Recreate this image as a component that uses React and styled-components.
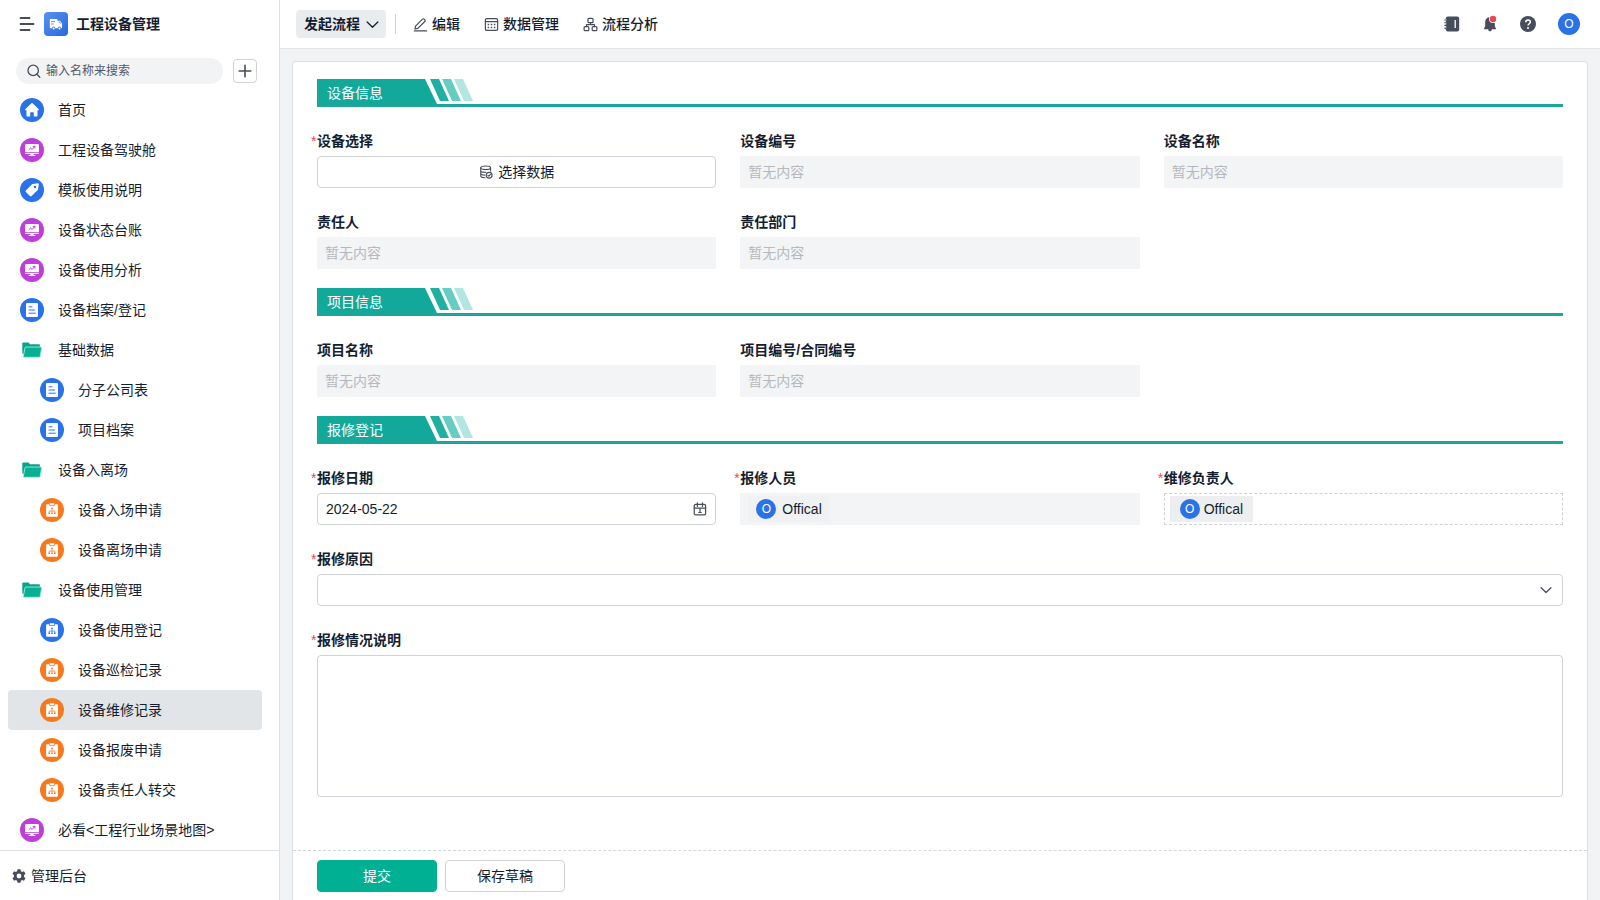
import React, { useState } from "react";
import styled, { createGlobalStyle } from "styled-components";

const GlobalStyle = createGlobalStyle`
  * {
    box-sizing: border-box;
  }

  body {
    margin: 0;
    background: #f1f3f5;
    color: #141e31;
    font-family: "Liberation Sans", "Noto Sans CJK SC", sans-serif;
    font-size: 14px;
    line-height: 22px;
  }

  button, input, select, textarea {
    font: inherit;
    color: inherit;
  }

  svg {
    display: block;
    flex-shrink: 0;
  }
`;

const Layout = styled.div`
  display: flex;
  height: 100vh;
`;

const Sidebar = styled.aside`
  display: flex;
  flex-direction: column;
  flex: 0 0 280px;
  background: #fff;
  border-right: 1px solid #dee0e2;
`;

const SidebarHeader = styled.div`
  display: flex;
  align-items: center;
  gap: 8px;
  padding: 12px 18px 0;
`;

const IconButton = styled.button`
  display: flex;
  align-items: center;
  justify-content: center;
  padding: 0;
  border: none;
  background: none;
  color: #484d5b;
  cursor: pointer;
`;

const MenuButton = styled(IconButton)`
  width: 18px;
  height: 18px;
`;

const AppLogo = styled.span`
  display: flex;
  align-items: center;
  justify-content: center;
  width: 24px;
  height: 24px;
  border-radius: 4px;
  background: linear-gradient(135deg, #5b93ee, #2a66dd);
`;

const AppName = styled.h1`
  margin: 0;
  font-size: 14px;
  font-weight: 700;
  line-height: 24px;
`;

const SearchRow = styled.div`
  display: flex;
  align-items: center;
  gap: 10px;
  padding: 22px 22px 6px 16px;
`;

const SearchBox = styled.label`
  display: flex;
  align-items: center;
  gap: 4px;
  flex: 1;
  height: 26px;
  padding: 0 10px;
  border-radius: 13px;
  background: #f1f3f4;
  color: #484d5b;
`;

const SearchInput = styled.input`
  flex: 1;
  min-width: 0;
  padding: 0;
  border: none;
  outline: none;
  background: transparent;
  font-size: 12px;
  line-height: 20px;

  &::placeholder {
    color: #525966;
    opacity: 1;
  }
`;

const AddButton = styled(IconButton)`
  width: 24px;
  height: 24px;
  border: 1px solid #cfd2d6;
  border-radius: 4px;
`;

const NavList = styled.nav`
  flex: 1;
  min-height: 0;
  overflow-y: auto;
  padding: 0 17px 0 8px;
`;

const NavItem = styled.a`
  display: flex;
  align-items: center;
  gap: 14px;
  height: 40px;
  padding-left: ${({ $nested }) => ($nested ? "32px" : "12px")};
  border-radius: 4px;
  background: ${({ $active }) => ($active ? "#e1e5e8" : "transparent")};
  color: #141e31;
  text-decoration: none;

  &:hover {
    background: ${({ $active }) => ($active ? "#e1e5e8" : "#f1f3f4")};
  }
`;

const NavIcon = styled.span`
  display: flex;
  align-items: center;
  justify-content: center;
  width: 24px;
  height: 24px;
  border-radius: 50%;
  background: ${({ $color }) => $color};
`;

const SidebarFooter = styled.a`
  display: flex;
  align-items: center;
  gap: 5px;
  height: 50px;
  padding: 1px 12px 0;
  border-top: 1px solid #dee0e2;
  color: #141e31;
  text-decoration: none;
`;

const Main = styled.main`
  display: flex;
  flex-direction: column;
  flex: 1;
  min-width: 0;
`;

const Topbar = styled.header`
  display: flex;
  align-items: center;
  height: 49px;
  padding: 0 20px 0 16px;
  border-bottom: 1px solid #e3e5e8;
  background: #fff;
`;

const StartButton = styled.button`
  display: flex;
  align-items: center;
  gap: 6px;
  height: 28px;
  padding: 0 7px 0 8px;
  border: none;
  border-radius: 4px;
  background: #e9ecef;
  font-weight: 700;
  cursor: pointer;
`;

const Divider = styled.span`
  width: 1px;
  height: 20px;
  margin: 0 17px 0 9px;
  background: #d0d3d7;
`;

const TopActions = styled.div`
  display: flex;
  gap: 24px;
`;

const TopAction = styled.button`
  display: flex;
  align-items: center;
  gap: 4px;
  padding: 0;
  border: none;
  background: none;
  font-weight: 500;
  cursor: pointer;

  svg {
    color: #484d5b;
  }
`;

const TopTools = styled.div`
  display: flex;
  align-items: center;
  gap: 22px;
  margin-left: auto;
`;

const Avatar = styled.span`
  display: flex;
  align-items: center;
  justify-content: center;
  width: ${({ $size }) => $size}px;
  height: ${({ $size }) => $size}px;
  border-radius: 50%;
  background: #2a72e8;
  color: #fff;
  font-size: 12px;
`;

const Card = styled.form`
  display: flex;
  flex-direction: column;
  flex: 1;
  min-height: 0;
  margin: 12px 12px 0;
  border: 1px solid #dcdfe3;
  border-bottom: none;
  border-radius: 4px 4px 0 0;
  background: #fff;
`;

const CardBody = styled.div`
  flex: 1;
  min-height: 0;
  overflow-y: auto;
  padding: 17px 24px 24px;
`;

const Section = styled.section`
  & + & {
    margin-top: 19px;
  }
`;

const SectionHeader = styled.div`
  display: flex;
  height: 28px;
  border-bottom: 3px solid #1ca598;
`;

const SectionTitle = styled.h2`
  width: 120px;
  margin: 0;
  padding-left: 10px;
  background: #12a99b;
  clip-path: polygon(0 0, 108px 0, 100% 100%, 0 100%);
  color: #fff;
  font-size: 14px;
  font-weight: 400;
  line-height: 28px;
`;

// the stripes start above the slanted end of the title
const StripeWrap = styled.span`
  margin-left: -7px;
`;

const Fields = styled.div`
  display: grid;
  grid-template-columns: repeat(3, minmax(0, 1fr));
  gap: 23px 24px;
  margin-top: 23px;
`;

const FieldBox = styled.div`
  grid-column: ${({ $wide }) => ($wide ? "1 / -1" : "auto")};
`;

const FieldLabel = styled.label`
  display: block;
  margin-bottom: 4px;
  font-weight: 700;
`;

const Required = styled.span`
  display: inline-block;
  width: 6px;
  margin-left: -6px;
  color: #e5484d;
  font-weight: 400;
`;

const controlFrame = `
  display: flex;
  align-items: center;
  width: 100%;
  height: 32px;
  border: 1px solid #cfd2d6;
  border-radius: 4px;
  background: #fff;
`;

const EmptyInput = styled.input`
  display: block;
  width: 100%;
  height: 32px;
  padding: 0 8px;
  border: none;
  border-radius: 2px;
  outline: none;
  background: #f3f4f5;

  &::placeholder {
    color: #b5b8be;
    opacity: 1;
  }
`;

const PickButton = styled.button`
  ${controlFrame}
  justify-content: center;
  gap: 5px;
  cursor: pointer;

  svg {
    color: #484d5b;
  }
`;

const DateBox = styled.div`
  ${controlFrame}
  padding: 0 8px;
  color: #484d5b;
`;

const DateInput = styled.input`
  flex: 1;
  min-width: 0;
  padding: 0;
  border: none;
  outline: none;
  background: transparent;
  color: #141e31;
`;

const SelectBox = styled.div`
  display: grid;
  align-items: center;

  select, svg {
    grid-area: 1 / 1;
  }

  svg {
    justify-self: end;
    margin-right: 11px;
    color: #484d5b;
    pointer-events: none;
  }
`;

const Select = styled.select`
  ${controlFrame}
  appearance: none;
  padding: 0 32px 0 8px;
`;

const TextArea = styled.textarea`
  display: block;
  width: 100%;
  height: 142px;
  padding: 4px 8px;
  border: 1px solid #cfd2d6;
  border-radius: 4px;
  outline: none;
  resize: none;
`;

const MemberBox = styled.div`
  display: flex;
  align-items: center;
  height: 32px;
  padding: ${({ $readOnly }) => ($readOnly ? "0 8px" : "0 5px")};
  border: ${({ $readOnly }) => ($readOnly ? "none" : "1px dashed #cfd2d6")};
  background: ${({ $readOnly }) => ($readOnly ? "#f3f4f5" : "#fff")};
`;

const MemberTag = styled.span`
  display: flex;
  align-items: center;
  gap: ${({ $readOnly }) => ($readOnly ? "6px" : "4px")};
  height: 26px;
  padding: ${({ $readOnly }) => ($readOnly ? "0 8px" : "0 10px")};
  background: ${({ $readOnly }) => ($readOnly ? "#f0f1f3" : "#eceef0")};
`;

const CardFooter = styled.div`
  display: flex;
  gap: 8px;
  padding: 9px 24px 8px;
  border-top: 1px dashed #d5d8db;
`;

const FormButton = styled.button`
  width: 120px;
  height: 32px;
  border: 1px solid ${({ $primary }) => ($primary ? "#00b092" : "#cfd2d6")};
  border-radius: 4px;
  background: ${({ $primary }) => ($primary ? "#00b092" : "#fff")};
  color: ${({ $primary }) => ($primary ? "#fff" : "#141e31")};
  cursor: pointer;
`;

const Line = ({ size = 16, width = 1.3, children }) => (
  <svg
    width={size}
    height={size}
    viewBox="0 0 16 16"
    fill="none"
    stroke="currentColor"
    strokeWidth={width}
    strokeLinecap="round"
    strokeLinejoin="round"
    aria-hidden="true"
  >
    {children}
  </svg>
);

const MenuIcon = () => (
  <Line width={1.8}>
    <path d="M1.5 2h9M1.5 8h13M1.5 14h9" />
  </Line>
);

const TruckIcon = () => (
  <svg width="14" height="14" viewBox="0 0 14 14" aria-hidden="true">
    <path
      fill="#fff"
      d="M1.5 2h6.3c.4 0 .7.3.7.7v1h2.1c.3 0 .5.1.7.3l1.5 2.3c.1.2.2.4.2.6v3.6c0 .4-.3.7-.7.7h-.2a1.6 1.6 0 0 0-3.2 0H6.2a1.6 1.6 0 0 0-3.2 0H1.5a.7.7 0 0 1-.7-.7V2.7c0-.4.3-.7.7-.7z"
    />
    <circle cx="4.6" cy="11.5" r="1" fill="#fff" />
    <circle cx="10.5" cy="11.5" r="1" fill="#fff" />
    <path d="M2 4.6h4M2 7h2.6M9.6 5h1.2l.9 1.6" fill="none" stroke="#417de5" strokeWidth=".8" />
  </svg>
);

const SearchIcon = () => (
  <Line>
    <circle cx="7.2" cy="7.4" r="5.2" />
    <path d="M11 11.3l2.8 2.9" />
  </Line>
);

const PlusIcon = () => (
  <Line width={1.6}>
    <path d="M8 2.2v11.6M2.2 8h11.6" />
  </Line>
);

const HomeIcon = () => (
  <svg width="16" height="16" viewBox="0 0 16 16" aria-hidden="true">
    <path
      fill="#fff"
      d="M8.6 1.3l6.1 5.9c.5.5.2 1.1-.4 1.1h-.8v5.4c0 .5-.3.8-.8.8H9.8v-3.7c0-.4-.2-.6-.6-.6H6.8c-.4 0-.6.2-.6.6v3.7H3.3c-.5 0-.8-.3-.8-.8V8.3h-.8c-.6 0-.9-.6-.4-1.1l6.1-5.9c.4-.3.8-.3 1.2 0z"
    />
  </svg>
);

const MonitorIcon = ({ color }) => (
  <svg width="16" height="16" viewBox="0 0 16 16" aria-hidden="true">
    <path fill="#fff" d="M2 2h12c.5 0 .9.4.9.9V10H1.1V2.9c0-.5.4-.9.9-.9z" />
    <path
      fill="#fff"
      d="M1.1 10.8h13.8v.4c0 .5-.4.9-.9.9H9.8v1H11c.4 0 .6.2.6.5s-.2.5-.6.5H5c-.4 0-.6-.2-.6-.5s.2-.5.6-.5h1.2v-1H2c-.5 0-.9-.4-.9-.9z"
    />
    <path
      d="M4.6 8l2-1.9 1.7 1.3 2.3-2.8M8.8 4.4H11v2"
      fill="none"
      stroke={color}
      strokeWidth="1"
    />
  </svg>
);

const TagIcon = () => (
  <svg width="16" height="16" viewBox="0 0 16 16" aria-hidden="true">
    <path
      fill="#fff"
      fillRule="evenodd"
      d="M8.8 1.9l4.9-.7c.7-.1 1.2.4 1.1 1.1l-.7 4.9c0 .3-.2.6-.4.8l-6.1 6.1c-.5.5-1.2.5-1.7 0l-4-4c-.5-.5-.5-1.2 0-1.7L8 2.3c.2-.2.5-.4.8-.4zM11 3.7a1.3 1.3 0 1 0 0 2.6 1.3 1.3 0 0 0 0-2.6z"
    />
  </svg>
);

const DocumentIcon = ({ color }) => (
  <svg width="14" height="14" viewBox="0 0 14 14" aria-hidden="true">
    <rect x="1" y="0" width="12" height="14" rx="1" fill="#fff" />
    <path d="M4 3.8h3M4 7h5.6M4 10.2h6.4" stroke={color} strokeWidth="1" strokeLinecap="round" />
  </svg>
);

const ClipboardIcon = ({ color }) => (
  <svg width="14" height="14" viewBox="0 0 14 14" aria-hidden="true">
    <path
      fill="#fff"
      d="M2 1.3h2v.8c0 .4.3.7.7.7h4.6c.4 0 .7-.3.7-.7v-.8h2c.5 0 .9.4.9.9v10.6c0 .5-.4.9-.9.9H2c-.5 0-.9-.4-.9-.9V2.2c0-.5.4-.9.9-.9z"
    />
    <rect x="4.7" y=".2" width="4.600" height="1.8" rx=".5" fill="#fff" />
    <path d="M7 5.600v3.600M4.200 9.600V8h5.600v1.600" fill="none" stroke={color} strokeWidth=".7" />
    <path
      d="M6.200 4.700h1.600v1.400H6.200zM3.400 9.500H5v1.400H3.400zM6.200 9.500h1.600v1.400H6.200zM9 9.500h1.600v1.400H9z"
      fill={color}
    />
  </svg>
);

const FolderIcon = () => (
  <svg width="20" height="16" viewBox="0 0 20 16" aria-hidden="true">
    <path
      fill="#06a58b"
      d="M1 .5h5.2c.4 0 .7.2.9.5l.8 1.2h9c.6 0 1 .4 1 1v2.3H3.6L1.6 13 .3 11V1.2C.3.8.6.5 1 .5z"
    />
    <path
      fill="#06b193"
      stroke="#b9f3e6"
      strokeWidth=".8"
      d="M4 5h15c.5 0 .8.4.7.9l-1.5 8.6c-.1.5-.5.8-1 .8H2c-.5 0-.8-.4-.7-.9l1.600-8.600c.1-.5.600-.8 1.100-.8z"
    />
  </svg>
);

const GearIcon = () => (
  <svg width="14" height="14" viewBox="0 0 14 14" aria-hidden="true">
    <path
      fill="#484d5b"
      fillRule="evenodd"
      d="M5.5.3h3l.4 1.9 1.2.7 1.9-.7 1.5 2.6-1.4 1.3v1.8l1.4 1.300-1.500 2.600-1.900-.7-1.200.7-.4 1.900h-3l-.4-1.900-1.200-.7-1.900.7L.5 9.200l1.400-1.300V6.100L.5 4.800 2 2.200l1.900.7 1.200-.7zM7 4.600a2.400 2.400 0 1 0 0 4.800 2.400 2.400 0 0 0 0-4.800z"
    />
  </svg>
);

const ChevronIcon = ({ size }) => (
  <Line size={size} width={1.6}>
    <path d="M1.4 5L8 11.400 14.600 5" />
  </Line>
);

const EditIcon = () => (
  <Line size={15}>
    <path d="M2.700 9.700l7.400-7.400c.5-.5 1.200-.5 1.700 0l.8.8c.5.5.5 1.200 0 1.700l-7.400 7.300-3.100.6zM1.500 14.800h13" />
  </Line>
);

const TableIcon = () => (
  <Line size={15}>
    <rect x="1.500" y="1.700" width="13" height="12.600" rx="1.500" />
    <path d="M1.500 5h13" />
    <path
      d="M3.900 8h1.600M7.200 8h1.600M10.500 8h1.600M3.900 11.200h1.600M7.200 11.200h1.600M10.500 11.200h1.600"
      strokeLinecap="butt"
      strokeWidth="1.500"
    />
  </Line>
);

const FlowIcon = () => (
  <Line size={15}>
    <rect x="5.300" y="1.400" width="5.400" height="4.600" rx="1" />
    <rect x="1.200" y="10.200" width="5" height="4.400" rx="1" />
    <rect x="9.800" y="10.200" width="5" height="4.400" rx="1" />
    <path d="M8 6v2.100M3.700 10.200V8.100h8.600v2.100" />
  </Line>
);

const DatabaseIcon = () => (
  <Line size={14}>
    <ellipse cx="7.600" cy="3.200" rx="5.600" ry="2" />
    <path d="M2 3.200v9.500c0 1.100 2.500 1.900 5 1.900M13.200 3.200v3.600M2 6.500c0 1.100 2.600 1.900 5.600 1.900M2 9.700c0 1 2.200 1.700 4.600 1.800" />
    <circle cx="11.600" cy="11.700" r="3.300" />
    <path d="M10.200 11.800l1.100 1 1.800-2" />
  </Line>
);

const CalendarIcon = () => (
  <Line size={14} width={1.4}>
    <rect x="1.400" y="2.800" width="13" height="11.800" rx="1.600" />
    <path d="M5 1v4M10.800 1v4M1.400 7h13M8 7v5M6.600 12h2.800" />
  </Line>
);

const NotebookIcon = () => (
  <svg width="16" height="16" viewBox="0 0 16 16" aria-hidden="true">
    <rect x="1.800" y=".6" width="13.400" height="14.800" rx="2" fill="#484d5b" />
    <path d="M.8 4h1.600M.8 6.700h1.600M.8 9.400h1.600M.8 12.100h1.600" stroke="#fff" strokeWidth="2" />
    <path d="M.4 4h2.600M.4 6.700h2.600M.4 9.400h2.600M.4 12.100h2.600" stroke="#484d5b" strokeWidth="1.100" />
    <path d="M11.200 4v8" stroke="#fff" strokeWidth="1.300" />
  </svg>
);

const BellIcon = () => (
  <svg width="16" height="18" viewBox="0 0 16 18" aria-hidden="true">
    <path
      fill="#484d5b"
      d="M8 2.300c2.900 0 4.800 2.100 4.800 4.900v4l1.200 2.200c.2.400 0 .8-.5.8H9.600a1.700 1.700 0 0 1-3.200 0H2.500c-.5 0-.7-.4-.5-.8l1.200-2.200v-4C3.200 4.400 5.100 2.300 8 2.300zM6.200 14h3.600c0 1.500-.7 2.300-1.800 2.300S6.200 15.500 6.200 14z"
    />
    <circle cx="11" cy="4" r="4" fill="#fff" />
    <circle cx="11" cy="4" r="3.200" fill="#e5484d" />
  </svg>
);

const HelpIcon = () => (
  <svg width="16" height="16" viewBox="0 0 16 16" aria-hidden="true">
    <circle cx="8" cy="8" r="8" fill="#484d5b" />
    <path
      d="M5.700 6.300C5.700 4.900 6.700 4 8 4s2.300.9 2.300 2.100c0 1.600-2.300 1.700-2.300 3.500"
      fill="none"
      stroke="#fff"
      strokeWidth="1.500"
    />
    <circle cx="8" cy="11.900" r="1" fill="#fff" />
  </svg>
);

const Stripes = () => (
  <svg width="44" height="22" viewBox="0 0 44 22" aria-hidden="true">
    <path fill="#1fb0a2" d="M0 0h9l10 22h-9z" />
    <path fill="#66cdc2" d="M12 0h9l10 22h-9z" />
    <path fill="#b2e6e0" d="M24 0h9l10 22h-9z" />
  </svg>
);

const BLUE = "#2a72e8";
const PURPLE = "#bd3fd8";
const ORANGE = "#f57a1f";

const navItems = [
  { label: "首页", icon: HomeIcon, color: BLUE },
  { label: "工程设备驾驶舱", icon: MonitorIcon, color: PURPLE },
  { label: "模板使用说明", icon: TagIcon, color: BLUE },
  { label: "设备状态台账", icon: MonitorIcon, color: PURPLE },
  { label: "设备使用分析", icon: MonitorIcon, color: PURPLE },
  { label: "设备档案/登记", icon: DocumentIcon, color: BLUE },
  { label: "基础数据", icon: FolderIcon, color: "transparent" },
  { label: "分子公司表", icon: DocumentIcon, color: BLUE, nested: true },
  { label: "项目档案", icon: DocumentIcon, color: BLUE, nested: true },
  { label: "设备入离场", icon: FolderIcon, color: "transparent" },
  { label: "设备入场申请", icon: ClipboardIcon, color: ORANGE, nested: true },
  { label: "设备离场申请", icon: ClipboardIcon, color: ORANGE, nested: true },
  { label: "设备使用管理", icon: FolderIcon, color: "transparent" },
  { label: "设备使用登记", icon: ClipboardIcon, color: BLUE, nested: true },
  { label: "设备巡检记录", icon: ClipboardIcon, color: ORANGE, nested: true },
  { label: "设备维修记录", icon: ClipboardIcon, color: ORANGE, nested: true },
  { label: "设备报废申请", icon: ClipboardIcon, color: ORANGE, nested: true },
  { label: "设备责任人转交", icon: ClipboardIcon, color: ORANGE, nested: true },
  { label: "必看<工程行业场景地图>", icon: MonitorIcon, color: PURPLE },
];

const Field = ({ id, label, required, wide, children }) => (
  <FieldBox $wide={wide}>
    <FieldLabel htmlFor={id} id={`${id}-label`}>
      {required && <Required>*</Required>}
      {label}
    </FieldLabel>
    {children}
  </FieldBox>
);

const EmptyField = ({ id, label }) => (
  <Field id={id} label={label}>
    <EmptyInput id={id} placeholder="暂无内容" readOnly />
  </Field>
);

const Member = ({ labelledBy, name, readOnly }) => (
  <MemberBox role="group" aria-labelledby={labelledBy} $readOnly={readOnly}>
    <MemberTag $readOnly={readOnly}>
      <Avatar $size={20}>{name[0]}</Avatar>
      {name}
    </MemberTag>
  </MemberBox>
);

const FormSection = ({ title, children }) => (
  <Section>
    <SectionHeader>
      <SectionTitle>{title}</SectionTitle>
      <StripeWrap>
        <Stripes />
      </StripeWrap>
    </SectionHeader>
    <Fields>{children}</Fields>
  </Section>
);

const App = () => {
  const [active, setActive] = useState("设备维修记录");
  const [date, setDate] = useState("2024-05-22");

  const handleNav = (e, label) => {
    e.preventDefault();
    setActive(label);
  };

  return (
    <Layout>
      <GlobalStyle />
      <Sidebar>
        <SidebarHeader>
          <MenuButton type="button" aria-label="菜单">
            <MenuIcon />
          </MenuButton>
          <AppLogo>
            <TruckIcon />
          </AppLogo>
          <AppName>工程设备管理</AppName>
        </SidebarHeader>
        <SearchRow>
          <SearchBox>
            <SearchIcon />
            <SearchInput type="text" placeholder="输入名称来搜索" aria-label="搜索" />
          </SearchBox>
          <AddButton type="button" aria-label="新建">
            <PlusIcon />
          </AddButton>
        </SearchRow>
        <NavList>
          {navItems.map(({ label, icon: Icon, color, nested }) => (
            <NavItem
              key={label}
              href="#"
              $nested={nested}
              $active={label === active}
              onClick={(e) => handleNav(e, label)}
            >
              <NavIcon $color={color}>
                <Icon color={color} />
              </NavIcon>
              {label}
            </NavItem>
          ))}
        </NavList>
        <SidebarFooter href="#">
          <GearIcon />
          管理后台
        </SidebarFooter>
      </Sidebar>

      <Main>
        <Topbar>
          <StartButton type="button">
            发起流程
            <ChevronIcon size={13} />
          </StartButton>
          <Divider />
          <TopActions>
            <TopAction type="button">
              <EditIcon />
              编辑
            </TopAction>
            <TopAction type="button">
              <TableIcon />
              数据管理
            </TopAction>
            <TopAction type="button">
              <FlowIcon />
              流程分析
            </TopAction>
          </TopActions>
          <TopTools>
            <IconButton type="button" aria-label="通讯录">
              <NotebookIcon />
            </IconButton>
            <IconButton type="button" aria-label="通知">
              <BellIcon />
            </IconButton>
            <IconButton type="button" aria-label="帮助">
              <HelpIcon />
            </IconButton>
            <Avatar $size={22}>O</Avatar>
          </TopTools>
        </Topbar>

        <Card onSubmit={(e) => e.preventDefault()}>
          <CardBody>
            <FormSection title="设备信息">
              <Field id="device" label="设备选择" required>
                <PickButton id="device" type="button">
                  <DatabaseIcon />
                  选择数据
                </PickButton>
              </Field>
              <EmptyField id="device-no" label="设备编号" />
              <EmptyField id="device-name" label="设备名称" />
              <EmptyField id="owner" label="责任人" />
              <EmptyField id="department" label="责任部门" />
            </FormSection>

            <FormSection title="项目信息">
              <EmptyField id="project-name" label="项目名称" />
              <EmptyField id="project-no" label="项目编号/合同编号" />
            </FormSection>

            <FormSection title="报修登记">
              <Field id="date" label="报修日期" required>
                <DateBox>
                  <DateInput id="date" type="text" value={date} onChange={(e) => setDate(e.target.value)} />
                  <CalendarIcon />
                </DateBox>
              </Field>
              <Field id="reporter" label="报修人员" required>
                <Member labelledBy="reporter-label" name="Offical" readOnly />
              </Field>
              <Field id="repairer" label="维修负责人" required>
                <Member labelledBy="repairer-label" name="Offical" />
              </Field>
              <Field id="reason" label="报修原因" required wide>
                <SelectBox>
                  <Select id="reason" defaultValue="">
                    <option value="" />
                  </Select>
                  <ChevronIcon size={12} />
                </SelectBox>
              </Field>
              <Field id="detail" label="报修情况说明" required wide>
                <TextArea id="detail" />
              </Field>
            </FormSection>
          </CardBody>
          <CardFooter>
            <FormButton type="submit" $primary>
              提交
            </FormButton>
            <FormButton type="button">保存草稿</FormButton>
          </CardFooter>
        </Card>
      </Main>
    </Layout>
  );
};

export default App;
